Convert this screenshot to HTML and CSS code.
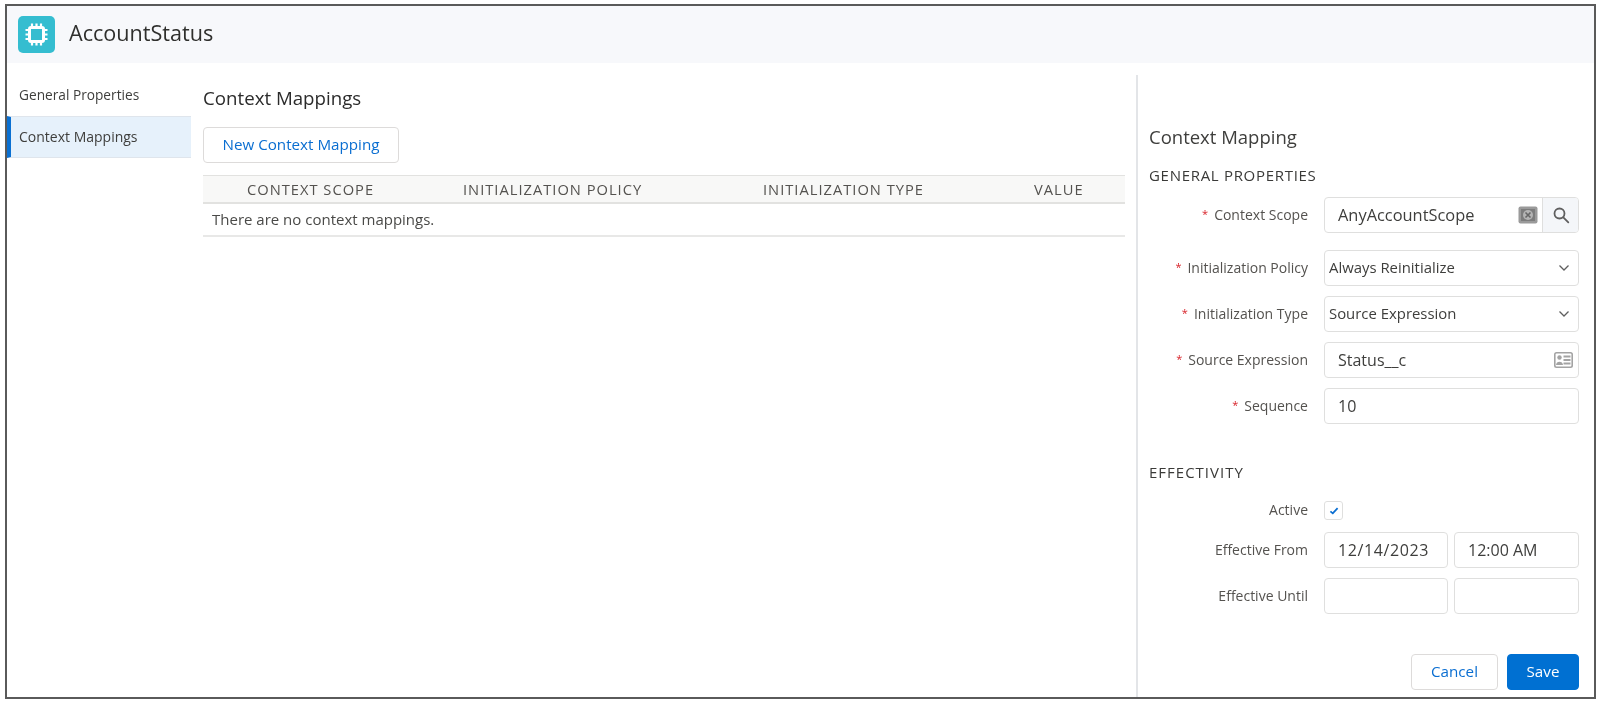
FILE: index.html
```html
<!DOCTYPE html>
<html lang="en">
<head>
<meta charset="utf-8">
<title>AccountStatus</title>
<link rel="stylesheet" href="styles.css">
</head>
<body>
<div class="frame">
  <header class="header">
    <div class="chip">
      <svg viewBox="0 0 37 37" width="37" height="37" fill="none" stroke="#fff">
        <rect x="11.500" y="11.500" width="14" height="14" rx="1.500" stroke-width="3"/>
        <path d="M14 7.500v3M18.500 7.500v3M23 7.500v3M14 26.500v3M18.500 26.500v3M23 26.500v3M7.500 14h3M7.500 18.500h3M7.500 23h3M26.500 14h3M26.500 18.500h3M26.500 23h3" stroke-width="2.200"/>
      </svg>
    </div>
    <h1 class="title">AccountStatus</h1>
  </header>
  <div class="body">
    <nav class="side">
      <div class="side-item">General Properties</div>
      <div class="side-item side-item-active">Context Mappings</div>
    </nav>
    <main class="main">
      <h2 class="main-title">Context Mappings</h2>
      <button class="btn btn-new">New Context Mapping</button>
      <div class="thead">
        <span>CONTEXT SCOPE</span>
        <span>INITIALIZATION POLICY</span>
        <span>INITIALIZATION TYPE</span>
        <span>VALUE</span>
      </div>
      <div class="empty">There are no context mappings.</div>
    </main>
    <aside class="panel">
      <h2 class="panel-title">Context Mapping</h2>
      <h3 class="section section-gen">GENERAL PROPERTIES</h3>
      <div class="form form-general">
        <div class="row row-scope">
          <label class="label"><i class="req">*</i>Context Scope</label>
          <div class="field field-inset">
            <span class="value value-scope">AnyAccountScope</span>
            <svg class="ic-scope" viewBox="0 0 20 18" width="20" height="18">
              <rect x="0.500" y="0.500" width="19" height="17" rx="2" fill="#9a9a9a"/>
              <path d="M3 3h14v12H3z" fill="#7c7c7c"/>
              <circle cx="10" cy="9" r="5" fill="#b4b4b4"/>
              <path d="M7.500 6.500l5 5M12.500 6.500l-5 5" stroke="#666" stroke-width="1.600"/>
            </svg>
            <div class="addon">
              <svg viewBox="0 0 18 18" width="18" height="18" fill="none" stroke="#5f5f5f" stroke-width="1.800">
                <circle cx="7.500" cy="7.500" r="5"/>
                <path d="M11.300 11.300l5 5" stroke-linecap="round"/>
              </svg>
            </div>
          </div>
        </div>
        <div class="row">
          <label class="label"><i class="req">*</i>Initialization Policy</label>
          <div class="field field-select">
            <span class="value">Always Reinitialize</span>
            <svg class="chev" viewBox="0 0 12 8" width="12" height="8" fill="none" stroke="#5f5f5f" stroke-width="1.300"><path d="M1.500 1.500L6 6l4.500-4.500"/></svg>
          </div>
        </div>
        <div class="row">
          <label class="label"><i class="req">*</i>Initialization Type</label>
          <div class="field field-select">
            <span class="value">Source Expression</span>
            <svg class="chev" viewBox="0 0 12 8" width="12" height="8" fill="none" stroke="#5f5f5f" stroke-width="1.300"><path d="M1.500 1.500L6 6l4.500-4.500"/></svg>
          </div>
        </div>
        <div class="row">
          <label class="label"><i class="req">*</i>Source Expression</label>
          <div class="field field-inset">
            <span class="value">Status__c</span>
            <svg class="ic-card" viewBox="0 0 19 16" width="19" height="16">
              <rect x="0" y="0" width="19" height="16" rx="2.500" fill="#a3a3a3"/>
              <rect x="1.600" y="1.600" width="15.800" height="12.800" rx="1" fill="#fff"/>
              <circle cx="5.500" cy="5.500" r="2.200" fill="#a3a3a3"/>
              <path d="M2 13c0-4.500 7-4.500 7 0z" fill="#a3a3a3"/>
              <path d="M9.500 4.500h7M9.500 8h7M9.500 11.500h7" stroke="#a3a3a3" stroke-width="2.200"/>
            </svg>
          </div>
        </div>
        <div class="row">
          <label class="label"><i class="req">*</i>Sequence</label>
          <div class="field field-inset"><span class="value">10</span></div>
        </div>
      </div>
      <h3 class="section section-eff">EFFECTIVITY</h3>
      <div class="form form-eff">
        <div class="row row-check">
          <label class="label">Active</label>
          <div class="check">
            <svg viewBox="0 0 12 10" width="10" height="8" fill="none" stroke="#0a6ed1" stroke-width="2.200"><path d="M1.500 5.500l3 2.500 6-6.500"/></svg>
          </div>
        </div>
        <div class="row row-from">
          <label class="label">Effective From</label>
          <div class="pair">
            <div class="field field-inset"><span class="value value-date">12/14/2023</span></div>
            <div class="field field-inset"><span class="value">12:00 AM</span></div>
          </div>
        </div>
        <div class="row">
          <label class="label">Effective Until</label>
          <div class="pair">
            <div class="field"></div>
            <div class="field"></div>
          </div>
        </div>
      </div>
      <div class="actions">
        <button class="btn btn-cancel">Cancel</button>
        <button class="btn btn-save">Save</button>
      </div>
    </aside>
  </div>
</div>
</body>
</html>
```

FILE: styles.css
```css
* { box-sizing: border-box; }
html, body { margin: 0; padding: 0; background: #fff; }
body {
  font-family: "Open Sans", "Liberation Sans", sans-serif;
  color: #3e3e3c;
  overflow: hidden;
}
.frame {
  margin: 4px 0 0 5px;
  width: 1591px;
  height: 695px;
  border: 2px solid #5a5a5a;
  display: flex;
  flex-direction: column;
  filter: blur(0.35px);
}
.header {
  height: 57px;
  flex: none;
  background: #f7f8fb;
  display: flex;
  align-items: center;
  padding-left: 11px;
  gap: 14px;
}
.chip {
  width: 37px;
  height: 37px;
  border-radius: 5px;
  background: #35bdd0;
  flex: none;
}
.chip svg { display: block; }
.title {
  margin: 0 0 3px;
  font-size: 21.600px;
  font-weight: 500;
  color: #2f2f2d;
  line-height: 26px;
}
.body { flex: 1; display: flex; min-height: 0; }
.side { width: 184px; flex: none; padding-top: 11px; }
.side-item {
  height: 42px;
  display: flex;
  align-items: center;
  padding: 0 0 2px 12px;
  font-size: 13.700px;
  color: #3e3e3c;
}
.side-item-active {
  background: #e6f1fb;
  border-top: 1px solid #dfe5ec;
  border-bottom: 1px solid #dfe5ec;
  border-left: 4px solid #0a70d2;
  padding-left: 8px;
  font-size: 14px;
}
.main { width: 934px; flex: none; padding: 22px 0 0 12px; }
.main-title {
  margin: 0;
  font-size: 18.700px;
  font-weight: 400;
  line-height: 26px;
  color: #2b2b2b;
}
.btn {
  font-family: inherit;
  font-size: 15.200px;
  border-radius: 4px;
  height: 36px;
  background: #fff;
  border: 1px solid #dddbda;
  color: #0a6ed1;
  padding: 0 0 2px;
}
.btn-new { display: block; width: 196px; margin-top: 16px; }
.thead {
  margin-top: 12px;
  height: 29px;
  background: #f8f8f7;
  border-top: 1px solid #e2e2e0;
  border-bottom: 2px solid #e2e2e0;
  display: grid;
  grid-template-columns: 216px 300px 271px 1fr;
  align-items: center;
  padding: 0 0 1px 44px;
  font-size: 14.700px;
  letter-spacing: 1px;
  color: #54524f;
}
.empty {
  height: 33px;
  display: flex;
  align-items: center;
  padding: 0 0 2px 9px;
  font-size: 15px;
  color: #4a4a48;
  border-bottom: 2px solid #e8e8e7;
}
.panel {
  flex: 1;
  margin-top: 12px;
  border-left: 2px solid #e3e5e8;
  margin-left: 11px;
  padding: 49px 15px 0 11px;
}
.panel-title {
  margin: 0 0 1px;
  font-size: 18.500px;
  font-weight: 400;
  line-height: 26px;
  color: #3e3e3c;
}
.section {
  margin: 17px 0 0;
  font-size: 15px;
  font-weight: 500;
  line-height: 16px;
  letter-spacing: 1px;
  color: #3a3a38;
}
.section-gen { letter-spacing: 0.700px; }
.section-eff { margin-top: 40px; }
.form { display: flex; flex-direction: column; gap: 10px; }
.form-general { margin-top: 14px; }
.form-eff { margin-top: 20px; }
.row {
  display: grid;
  grid-template-columns: 159px 255px;
  column-gap: 16px;
  align-items: center;
}
.row-scope { margin-bottom: 7px; }
.row-check { margin-bottom: 1px; }
.label {
  text-align: right;
  font-size: 14px;
  color: #54524f;
  padding-bottom: 2px;
}
.req {
  color: #d8232a;
  font-style: normal;
  font-size: 11px;
  margin-right: 6px;
  position: relative;
  top: -2px;
}
.field {
  height: 36px;
  border: 1px solid #dfdfde;
  border-radius: 4px;
  background: #fff;
  display: flex;
  align-items: center;
  font-size: 16px;
  color: #3e3e3c;
  min-width: 0;
}
.value { flex: 1; white-space: nowrap; padding-bottom: 1px; }
.value-date { letter-spacing: 0.600px; }
.value-scope { font-size: 16.400px; }
.field-inset { padding-left: 13px; }
.field-select { padding: 0 3px 1px 4px; font-size: 14.900px; }
.chev { margin-right: 5px; }
.ic-scope { margin-right: 4px; }
.ic-card { margin-right: 5px; }
.addon {
  width: 36px;
  height: 34px;
  background: #f4f6f9;
  border-left: 1px solid #dfdfde;
  border-radius: 0 3px 3px 0;
  display: flex;
  align-items: center;
  justify-content: center;
}
.check {
  width: 19px;
  height: 19px;
  border: 1px solid #dfdfde;
  border-radius: 3px;
  display: flex;
  align-items: center;
  justify-content: center;
}
.pair { display: grid; grid-template-columns: 124px 125px; column-gap: 6px; }
.actions { display: flex; justify-content: flex-end; gap: 9px; margin-top: 40px; }
.btn-cancel { width: 87px; }
.btn-save { width: 72px; background: #0070d2; border-color: #0070d2; color: #fff; }
```
